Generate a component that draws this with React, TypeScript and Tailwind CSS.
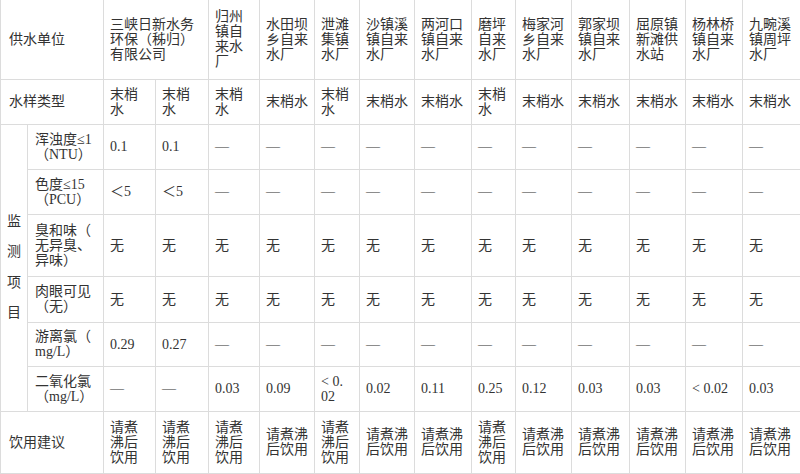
const font = '"Liberation Serif", "Noto Sans CJK SC", serif';

const widths = ["w-[27px]", "w-[76px]", "w-[52px]", "w-[53px]", "w-[51px]", "w-[55px]", "w-[45px]", "w-[55px]", "w-[57px]", "w-[44px]", "w-[56px]", "w-[58px]", "w-[56px]", "w-[57px]", "w-[58px]"];

const units = [
  "归州\n镇自\n来水\n厂",
  "水田坝\n乡自来\n水厂",
  "泄滩\n集镇\n水厂",
  "沙镇溪\n镇自来\n水厂",
  "两河口\n镇自来\n水厂",
  "磨坪\n自来\n水厂",
  "梅家河\n乡自来\n水厂",
  "郭家坝\n镇自来\n水厂",
  "屈原镇\n新滩供\n水站",
  "杨林桥\n镇自来\n水厂",
  "九畹溪\n镇周坪\n水厂",
];

// columns that are narrow enough to wrap after two characters
const narrow = [true, true, true, false, true, false, false, true, false, false, false, false, false];

const dash = Array(11).fill("—");

const items: { label: string; values: string[] }[] = [
  { label: "浑浊度≤1\n（NTU）", values: ["0.1", "0.1", ...dash] },
  { label: "色度≤15\n（PCU）", values: ["＜5", "＜5", ...dash] },
  { label: "臭和味（\n无异臭、\n异味）", values: Array(13).fill("无") },
  { label: "肉眼可见\n（无）", values: Array(13).fill("无") },
  { label: "游离氯（\nmg/L）", values: ["0.29", "0.27", ...dash] },
  {
    label: "二氧化氯\n（mg/L）",
    values: ["—", "—", "0.03", "0.09", " < 0.\n02", "0.02", "0.11", "0.25", "0.12", "0.03", "0.03", " < 0.02", "0.03"],
  },
];

const heights = ["h-[45px]", "h-[45px]", "h-[62px]", "h-[46px]", "h-[44px]", "h-[45px]"];

const cell = "border border-[#dcdcdc] px-[6px] align-middle whitespace-pre-line";

export default function App() {
  return (
    <div className="w-[800px] h-[474px] bg-white overflow-hidden text-[#333] text-[14px] leading-[15px]" style={{ fontFamily: font }}>
      <table className="w-[800px] table-fixed border-collapse">
        <colgroup>
          {widths.map((w, i) => (
            <col key={i} className={w} />
          ))}
        </colgroup>
        <tbody>
          <tr className="h-[79px]">
            <td colSpan={2} className={`${cell} border-t-0 pl-[8px]`}>供水单位</td>
            <td colSpan={2} className={`${cell} border-t-0`}>{"三峡日新水务\n环保（秭归）\n有限公司"}</td>
            {units.map((u, i) => (
              <td key={i} className={`${cell} border-t-0`}>{u}</td>
            ))}
          </tr>
          <tr className="h-[45px]">
            <td colSpan={2} className={`${cell} pl-[8px]`}>水样类型</td>
            {narrow.map((n, i) => (
              <td key={i} className={cell}>{n ? "末梢\n水" : "末梢水"}</td>
            ))}
          </tr>
          {items.map((it, r) => (
            <tr key={r} className={heights[r]}>
              {r === 0 && (
                <td rowSpan={6} className={`${cell} px-0 text-center leading-[30.5px]`}>
                  {"监\n测\n项\n目"}
                </td>
              )}
              <td className={`${cell} pl-[7px]`}>{it.label}</td>
              {it.values.map((v, i) => (
                <td key={i} className={cell}>{v}</td>
              ))}
            </tr>
          ))}
          <tr className="h-[62px]">
            <td colSpan={2} className={`${cell} pl-[8px]`}>饮用建议</td>
            {narrow.map((n, i) => (
              <td key={i} className={cell}>{n ? "请煮\n沸后\n饮用" : "请煮沸\n后饮用"}</td>
            ))}
          </tr>
        </tbody>
      </table>
    </div>
  );
}
